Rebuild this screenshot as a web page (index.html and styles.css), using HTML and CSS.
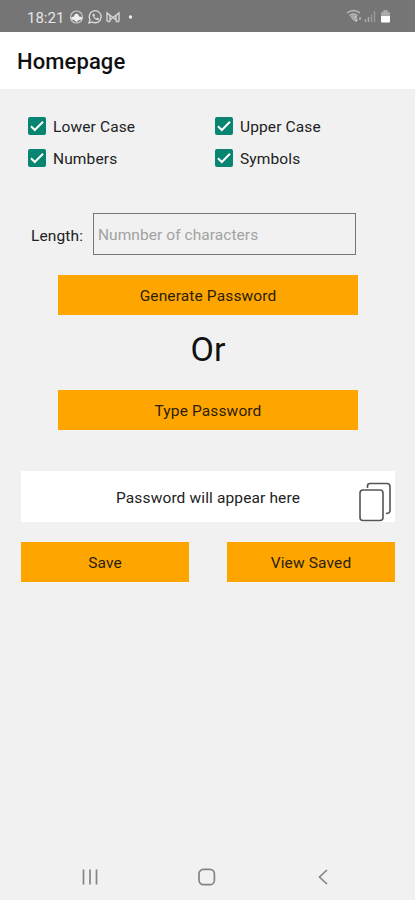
FILE: index.html
```html
<!DOCTYPE html>
<html lang="en">
<head>
<meta charset="utf-8">
<title>Homepage</title>
<link rel="stylesheet" href="styles.css">
</head>
<body>
<div class="status">
  <span class="time">18:21</span>
  <svg class="notices" width="68" height="16" viewBox="0 0 68 16" fill="none">
    <circle cx="7.5" cy="8" r="6" stroke="#c8c8c8" stroke-width="1.2"/>
    <path d="M2 8.500Q4 7.500 5 7.500Q5 5 7.500 4.500Q10 5 10 7.500Q12 7.500 13.500 8.500Q13 11 10 11L7.500 13 5 11Q2 11 2 8.500Z" fill="#eee"/>
    <path d="M20 14l1-3.2a6 6 0 1 1 2.3 2.2z" stroke="#dedede" stroke-width="1.3"/>
    <path d="M23.5 5.2l1.5-.7 1 2-.8 1q.8 1.4 2.1 1.9l1-1 1.8 1-.5 1.3q-1.6 1-4-.9-2.7-2.500-2.100-4.600z" fill="#dedede"/>
    <path d="M38 12.500V4l6 4.500L50 4v8.500M41 12.500V6.500M47 12.500V6.500M38.500 12.500h2.500M47 12.500h3M41 11l3-2.500L47 11" stroke="#d4d4d4" stroke-width="1.400"/>
    <circle cx="61.500" cy="8" r="1.700" fill="#eee"/>
  </svg>
  <svg class="signals" width="46" height="18" viewBox="0 0 46 18" fill="none">
    <path d="M1 5q6.500-5 13 0M3.500 7.500q4-3 8 0" stroke="#bcbcbc" stroke-width="1.500"/>
    <path d="M4 8l3.500 5 3.500-5q-3.500-2-7 0z" fill="#aaa"/>
    <path d="M10 8v5M8.500 11.500l1.500 2 1.500-2M14 12V9" stroke="#ddd"/>
    <path d="M19.500 14v-3M22.500 14V9" stroke="#aaa" stroke-width="1.500"/>
    <path d="M25.500 14V6.500M28.500 14V3" stroke="#999" stroke-width="1.500"/>
    <path d="M35 8V4.500l2.500-1V2h4v1.500l2.500 1V8z" fill="#aaa"/>
    <path d="M35 8h9v5.500q0 1-1 1h-7q-1 0-1-1z" fill="#fff"/>
  </svg>
</div>
<header class="header"><h1>Homepage</h1></header>
<main class="main">
  <div class="checks">
    <div class="check"><svg class="box" viewBox="0 0 18 18"><path d="M3 9.200l3.800 3.800L15 4.800"/></svg><span>Lower Case</span></div>
    <div class="check"><svg class="box" viewBox="0 0 18 18"><path d="M3 9.200l3.800 3.800L15 4.800"/></svg><span>Upper Case</span></div>
    <div class="check"><svg class="box" viewBox="0 0 18 18"><path d="M3 9.200l3.800 3.800L15 4.800"/></svg><span>Numbers</span></div>
    <div class="check"><svg class="box" viewBox="0 0 18 18"><path d="M3 9.200l3.800 3.800L15 4.800"/></svg><span>Symbols</span></div>
  </div>
  <div class="length"><label for="len">Length:</label><input id="len" type="text" placeholder="Numnber of characters"></div>
  <button class="btn wide">Generate Password</button>
  <p class="or">Or</p>
  <button class="btn wide">Type Password</button>
  <div class="result">
    <span>Password will appear here</span>
    <svg class="copy" width="34" height="40" viewBox="0 0 34 40" fill="none" stroke="#555" stroke-width="1.600">
      <rect x="2" y="8" width="23" height="30.500" rx="3"/>
      <path d="M9.500 6V4q0-2.500 2.500-2.500H29q3 0 3 3V28.500q0 3-4 3"/>
    </svg>
  </div>
  <div class="actions"><button class="btn">Save</button><button class="btn">View Saved</button></div>
</main>
<nav class="nav">
  <svg width="18" height="18" viewBox="0 0 18 18"><path d="M2.500 1.500v15M9 1.500v15M15.500 1.500v15"/></svg>
  <svg width="18" height="18" viewBox="0 0 18 18"><rect x="1" y="1.300" width="15.400" height="15.400" rx="4.500"/></svg>
  <svg width="18" height="18" viewBox="0 0 18 18"><path d="M13 2L5.500 9l7.500 7"/></svg>
</nav>
</body>
</html>
```
FILE: styles.css
```css
* { box-sizing: border-box; }
body {
  margin: 0;
  height: 900px;
  display: flex;
  flex-direction: column;
  background: #f1f1f1;
  color: #222;
  font: 15.5px/20px Roboto, sans-serif;
  letter-spacing: 0.13px;
}
.status {
  height: 32px;
  padding: 2px 23px 0 27px;
  display: flex;
  align-items: center;
  background: #757575;
  color: #e6e6e6;
}
.time { width: 42px; padding-top: 2px; font-size: 15px; letter-spacing: 0; }
.signals { margin-left: auto; }
.header {
  height: 57px;
  padding: 2px 17px 0;
  display: flex;
  align-items: center;
  background: #fff;
}
.header h1 { margin: 0; font-size: 22px; line-height: 28px; font-weight: 500; letter-spacing: 0.1px; color: #111; }
.main { flex: 1; display: flex; flex-direction: column; padding: 21px 20px 0 21px; }
.checks { display: grid; grid-template-columns: 187px 1fr; grid-auto-rows: 32px; padding-left: 7px; }
.check { display: flex; align-items: center; gap: 7px; }
.check span { padding-top: 2px; }
.box { width: 18px; height: 18px; border-radius: 2px; background: #078571; }
.box path { fill: none; stroke: #fff; stroke-width: 2; }
.length { display: flex; align-items: center; margin-top: 39px; padding-left: 10px; }
.length label { width: 62px; padding-top: 3px; }
.length input {
  width: 263px;
  height: 42px;
  padding: 2px 4px 0;
  border: 1.5px solid #777;
  border-radius: 0;
  background: transparent;
  font: inherit;
  letter-spacing: 0.06px;
}
.length input::placeholder { color: #a2a2a2; opacity: 1; }
.btn {
  height: 40px;
  padding: 1px 0 0;
  border: 0;
  background: #ffa500;
  color: #2b2108;
  font: inherit;
  letter-spacing: inherit;
}
.wide { width: 300px; margin: 20px 0 0 37px; }
.or { margin: 14px 0 0; font-size: 34px; line-height: 40px; text-align: center; color: #111; }
.or + .wide { margin-top: 21px; }
.result {
  height: 51px;
  margin-top: 41px;
  padding: 2px 3px 0 0;
  display: flex;
  align-items: center;
  background: #fff;
}
.result span { flex: 1; padding-left: 37px; text-align: center; }
.copy { margin-top: 8px; }
.actions { display: grid; grid-template-columns: 168px 168px; justify-content: space-between; margin-top: 20px; }
.nav { height: 46px; padding: 0 83px 0 81px; display: flex; align-items: center; justify-content: space-between; }
.nav svg { fill: none; stroke: #858585; stroke-width: 1.7; }
```
